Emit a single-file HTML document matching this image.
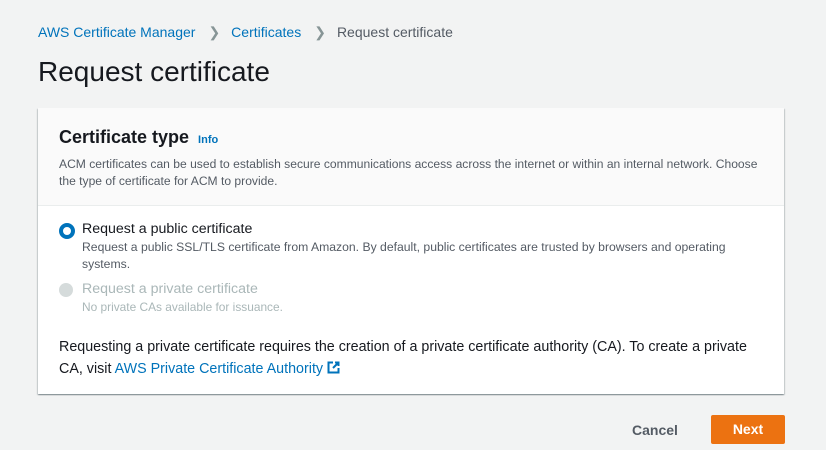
<!DOCTYPE html>
<html><head><style>
body{margin:0;width:826px;height:450px;background:#f2f3f3;font-family:"Liberation Sans",sans-serif;color:#16191f;position:relative;overflow:hidden}
.a{position:absolute;white-space:nowrap}
.link{color:#0073bb}
.card{position:absolute;left:38px;top:108px;width:746px;height:286px;background:#fff;box-shadow:0 1px 1px rgba(0,28,36,.3),1px 1px 1px rgba(0,28,36,.15),-1px 1px 1px rgba(0,28,36,.15);}
.hd{position:absolute;left:0;top:0;width:746px;height:97px;background:#fafafa;border-bottom:1px solid #eaeded}
</style></head><body>
<div class="a" style="left:38px;top:24px;font-size:14px"><span class="link">AWS Certificate Manager</span><span style="color:#879596;margin:0 11px 0 13px">&#x276F;</span><span class="link">Certificates</span><span style="color:#879596;margin:0 11px 0 13px">&#x276F;</span><span style="color:#545b64">Request certificate</span></div>
<div class="a" style="left:38px;top:56px;font-size:28px">Request certificate</div>
<div class="card">
<div class="hd"></div>
<div class="a" style="left:21px;top:19px;font-size:18px;font-weight:bold">Certificate type <span class="link" style="font-size:11px;margin-left:4px">Info</span></div>
<div class="a" style="left:21px;top:48px;font-size:12.1px;color:#545b64;line-height:17px">ACM certificates can be used to establish secure communications access across the internet or within an internal network. Choose<br>the type of certificate for ACM to provide.</div>
<div class="a" style="left:21px;top:115px;width:8px;height:8px;border:4px solid #0073bb;border-radius:50%;background:#fff"></div>
<div class="a" style="left:44px;top:113px;font-size:14.2px">Request a public certificate</div>
<div class="a" style="left:44px;top:131px;font-size:12.2px;color:#545b64;line-height:17px">Request a public SSL/TLS certificate from Amazon. By default, public certificates are trusted by browsers and operating<br>systems.</div>
<div class="a" style="left:21px;top:175px;width:14px;height:14px;border-radius:50%;background:#d5dbdb"></div>
<div class="a" style="left:44px;top:173px;font-size:14.2px;color:#aab7b8">Request a private certificate</div>
<div class="a" style="left:44px;top:192px;font-size:11.9px;color:#aab7b8">No private CAs available for issuance.</div>
<div class="a" style="left:21px;top:228px;font-size:14.3px;line-height:22px">Requesting a private certificate requires the creation of a private certificate authority (CA). To create a private<br>CA, visit <span class="link">AWS Private Certificate Authority</span> <svg width="13" height="13" viewBox="0 0 13 13" style="vertical-align:-1px"><path d="M6 1.5H1.5v10h10V7M8 1.5h3.5V5M11.5 1.5L6 7" fill="none" stroke="#0073bb" stroke-width="2"/></svg></div>
</div>
<div class="a" style="left:632px;top:422px;font-size:14px;font-weight:bold;color:#545b64">Cancel</div>
<div class="a" style="left:711px;top:415px;width:74px;height:29px;background:#ec7211;border-radius:2px;color:#fff;font-size:14px;font-weight:bold;text-align:center;line-height:29px">Next</div>
</body></html>
